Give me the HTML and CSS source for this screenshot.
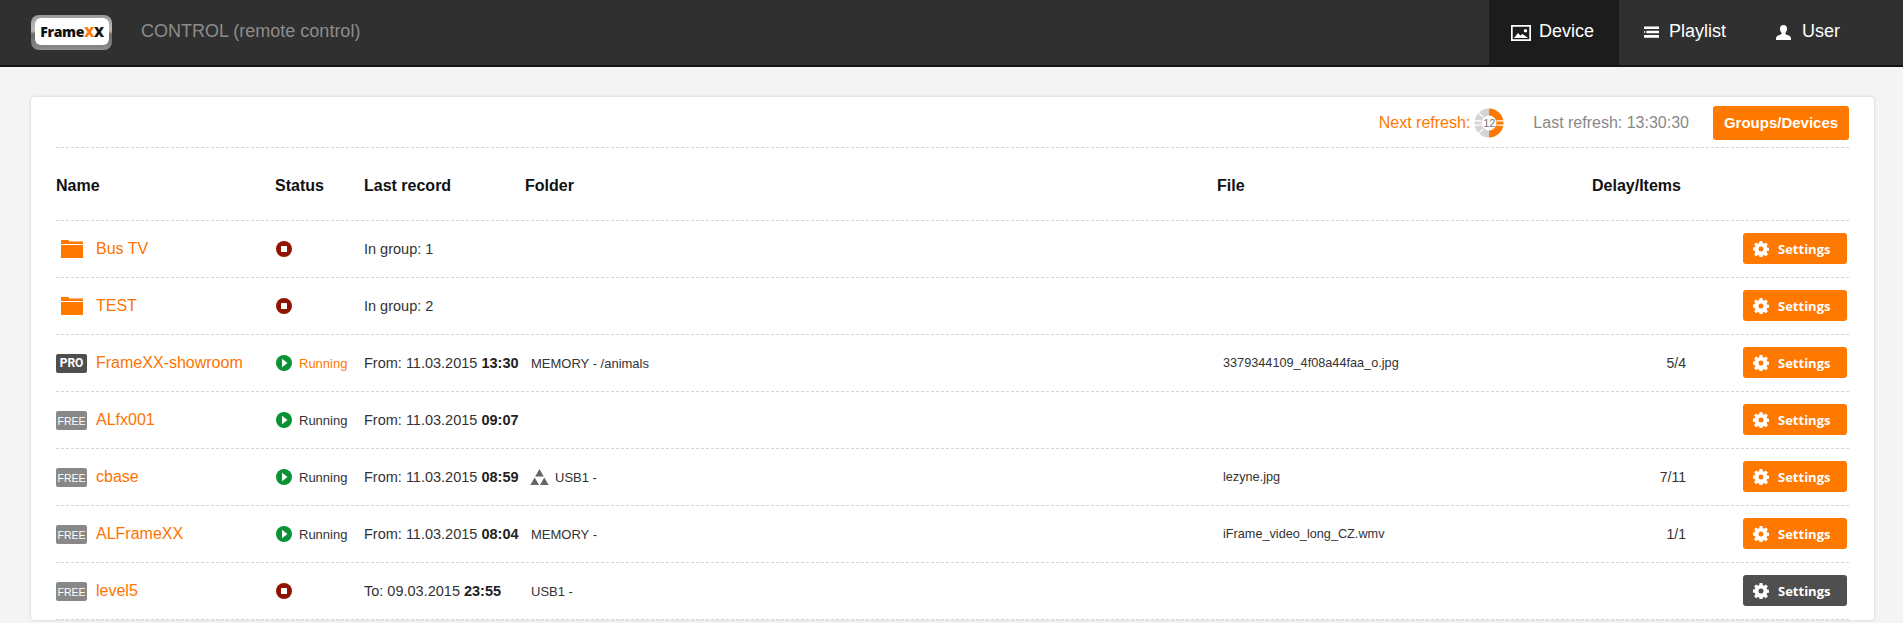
FILE: index.html
```html
<!DOCTYPE html>
<html lang="en">
<head>
<meta charset="utf-8">
<title>FrameXX CONTROL</title>
<link rel="stylesheet" href="styles.css">
</head>
<body>
<svg class="defs" width="0" height="0" aria-hidden="true">
  <defs>
    <symbol id="gear" viewBox="0 0 16 16"><path fill="currentColor" fill-rule="evenodd" d="M6.6 0h2.8l.4 2.2 1.2.5L12.900 1.400l2 2-1.300 1.900.5 1.200 2.200.4v2.800l-2.200.4-.5 1.200 1.300 1.900-2 2-1.900-1.300-1.200.5-.4 2.200H6.600l-.4-2.200-1.200-.5-1.900 1.300-2-2 1.300-1.900-.5-1.200L-.3 9.400V6.600l2.200-.4.500-1.200L1.100 3.400l2-2L5 2.700l1.200-.5zM8 5.500a2.500 2.500 0 1 0 0 5 2.500 2.500 0 0 0 0-5z"/></symbol>
    <symbol id="folder" viewBox="0 0 22 18"><path fill="currentColor" d="M0 .5Q0 0 .5 0h6.800l1.200 1.500H22V4H0zM0 5h22v13H0z"/></symbol>
    <symbol id="stop" viewBox="0 0 16 16"><circle cx="8" cy="8" r="8" fill="#8f1300"/><rect x="5" y="5" width="6" height="6" rx=".6" fill="#fff"/></symbol>
    <symbol id="play" viewBox="0 0 16 16"><circle cx="8" cy="8" r="8" fill="#0a9336"/><path d="M6 3.800v8.400L11.500 8z" fill="#fff"/></symbol>
    <symbol id="tri" viewBox="0 0 19 16"><path fill="#666" d="M9.500 0l4.300 7.500H5.200zM4.700 8.400l4.300 7.600H.3zM14.300 8.400l4.400 7.600H10z"/></symbol>
  </defs>
</svg>

<header class="topbar">
  <div class="brand">
    <div class="logo"><span class="logo-inner">Frame<span class="x-o">X</span>X</span></div>
    <span class="app-title">CONTROL (remote control)</span>
  </div>
  <nav class="nav">
    <a class="nav-item active">
      <svg class="nav-icon ni-image" viewBox="0 0 20 16"><path fill="#fff" fill-rule="evenodd" d="M0 0h20v16H0zM1.700 1.700v12.600h16.600V1.700z"/><path fill="#fff" d="M3 13l4-5 2.500 2.500 2-1.500 5.500 4zM14.500 4a1.700 1.700 0 1 1 0 3.400 1.700 1.700 0 0 1 0-3.400z"/></svg>
      Device
    </a>
    <a class="nav-item">
      <svg class="nav-icon ni-list" viewBox="0 0 16 12"><path fill="#fff" d="M0 0h16v2.800H0zM2.500 4.600H16v2.800H2.500zM0 4.600l1.700 1.400L0 7.400zM0 9.200h16V12H0z"/></svg>
      Playlist
    </a>
    <a class="nav-item">
      <svg class="nav-icon ni-user" viewBox="0 0 15 15"><path fill="#fff" d="M7.500 0C10 0 11.300 1.800 11 4.300c-.2 1.600-1 3-1.600 3.700-.2.700 0 1.200.7 1.500 2 .8 4.900 1.500 4.900 3.700V15H0v-1.800c0-2.200 2.900-2.900 4.900-3.700.7-.3.900-.8.700-1.500C5 7.300 4.200 5.900 4 4.300 3.700 1.800 5 0 7.500 0z"/></svg>
      User
    </a>
  </nav>
</header>

<main class="page">
  <section class="card">
    <div class="toolbar">
      <span class="next">Next refresh:</span>
      <span class="timer">
        <svg viewBox="0 0 30 30" width="30" height="30">
          <path class="t-gray" d="M15 4a11 11 0 0 0 0 22"/>
          <path class="t-orange" d="M15 4a11 11 0 0 1 0 22"/>
          <path class="t-gap" d="M0 12.800h7.500M22.500 12.800h7.500M0 17.200h7.500M22.500 17.200h7.500M4 4l5 5M4 26l5-5"/>
        </svg>
        <span class="timer-num">12</span>
      </span>
      <span class="last">Last refresh: 13:30:30</span>
      <a class="btn-groups">Groups/Devices</a>
    </div>

    <div class="row head">
      <div>Name</div><div>Status</div><div>Last record</div><div>Folder</div><div>File</div><div class="c-delay-h">Delay/Items</div><div></div>
    </div>

    <div class="row">
      <div class="name"><span class="lead"><svg class="folder"><use href="#folder"/></svg></span><a>Bus TV</a></div>
      <div class="status"><svg class="st"><use href="#stop"/></svg></div>
      <div class="rec">In group: 1</div><div class="fold"></div><div class="file"></div><div class="delay"></div>
      <div class="act"><a class="btn"><svg class="gear"><use href="#gear"/></svg>Settings</a></div>
    </div>

    <div class="row">
      <div class="name"><span class="lead"><svg class="folder"><use href="#folder"/></svg></span><a>TEST</a></div>
      <div class="status"><svg class="st"><use href="#stop"/></svg></div>
      <div class="rec">In group: 2</div><div class="fold"></div><div class="file"></div><div class="delay"></div>
      <div class="act"><a class="btn"><svg class="gear"><use href="#gear"/></svg>Settings</a></div>
    </div>

    <div class="row">
      <div class="name"><span class="lead"><span class="tag pro">PRO</span></span><a>FrameXX-showroom</a></div>
      <div class="status"><svg class="st"><use href="#play"/></svg><span class="run hot">Running</span></div>
      <div class="rec">From: 11.03.2015 <b>13:30</b></div><div class="fold">MEMORY - /animals</div><div class="file">3379344109_4f08a44faa_o.jpg</div><div class="delay">5/4</div>
      <div class="act"><a class="btn"><svg class="gear"><use href="#gear"/></svg>Settings</a></div>
    </div>

    <div class="row">
      <div class="name"><span class="lead"><span class="tag">FREE</span></span><a>ALfx001</a></div>
      <div class="status"><svg class="st"><use href="#play"/></svg><span class="run">Running</span></div>
      <div class="rec">From: 11.03.2015 <b>09:07</b></div><div class="fold"></div><div class="file"></div><div class="delay"></div>
      <div class="act"><a class="btn"><svg class="gear"><use href="#gear"/></svg>Settings</a></div>
    </div>

    <div class="row">
      <div class="name"><span class="lead"><span class="tag">FREE</span></span><a>cbase</a></div>
      <div class="status"><svg class="st"><use href="#play"/></svg><span class="run">Running</span></div>
      <div class="rec">From: 11.03.2015 <b>08:59</b></div><div class="fold fold-icon"><svg class="tri"><use href="#tri"/></svg>USB1 -</div><div class="file">lezyne.jpg</div><div class="delay">7/11</div>
      <div class="act"><a class="btn"><svg class="gear"><use href="#gear"/></svg>Settings</a></div>
    </div>

    <div class="row">
      <div class="name"><span class="lead"><span class="tag">FREE</span></span><a>ALFrameXX</a></div>
      <div class="status"><svg class="st"><use href="#play"/></svg><span class="run">Running</span></div>
      <div class="rec">From: 11.03.2015 <b>08:04</b></div><div class="fold">MEMORY -</div><div class="file">iFrame_video_long_CZ.wmv</div><div class="delay">1/1</div>
      <div class="act"><a class="btn"><svg class="gear"><use href="#gear"/></svg>Settings</a></div>
    </div>

    <div class="row">
      <div class="name"><span class="lead"><span class="tag">FREE</span></span><a>level5</a></div>
      <div class="status"><svg class="st"><use href="#stop"/></svg></div>
      <div class="rec">To: 09.03.2015 <b>23:55</b></div><div class="fold">USB1 -</div><div class="file"></div><div class="delay"></div>
      <div class="act"><a class="btn off"><svg class="gear"><use href="#gear"/></svg>Settings</a></div>
    </div>
  </section>
</main>
</body>
</html>
```

FILE: styles.css
```css
* { box-sizing: border-box; }
html, body { margin: 0; height: 100%; overflow: hidden; }
body {
  background: #f4f4f4;
  font-family: "Liberation Sans", Arial, sans-serif;
  color: #333;
}
.defs { position: absolute; }

.topbar {
  height: 67px;
  background: #303030;
  border-bottom: 2px solid #141414;
  display: flex;
  justify-content: space-between;
}
.brand { display: flex; align-items: center; padding-left: 31px; }
.logo {
  width: 81px;
  height: 35px;
  border-radius: 8px;
  padding: 3px 3px 5px 4px;
  background: linear-gradient(#9a9a9a, #bdbdbd 45%, #6a6a6a 55%, #8e8e8e);
  display: flex;
}
.logo-inner {
  flex: 1;
  background: #fff;
  border-radius: 6px;
  color: #111;
  font: 800 14px/28px "Open Sans", sans-serif;
  letter-spacing: -.3px;
  text-align: center;
}
.x-o { color: #ff7800; }
.app-title { margin-left: 29px; font-size: 18px; color: #8c8c8c; position: relative; top: -1px; }

.nav { display: flex; margin-right: 30px; }
.nav-item {
  display: flex;
  align-items: center;
  color: #fff;
  font-size: 18px;
  padding: 0 22px 2px;
  gap: 8px;
}
.nav-item.active { background: #1c1c1c; width: 130px; }
.nav-item:nth-child(2) { width: 130px; padding-left: 25px; gap: 10px; padding-right: 0; }
.nav-item:nth-child(3) { padding-left: 27px; padding-right: 0; width: 124px; gap: 11px; }
.nav-icon { flex: none; display: block; }
.ni-image { width: 20px; height: 16px; margin-top: 2px; }
.ni-list { width: 15px; height: 12px; }
.ni-user { width: 15px; height: 15px; margin-top: 2px; }

.page { padding: 30px 29px 0 31px; }
.card {
  background: #fff;
  border-radius: 3px;
  box-shadow: 0 0 3px rgba(0, 0, 0, .18);
  padding: 0 25px;
}
.toolbar {
  height: 51px;
  padding-top: 9px;
  border-bottom: 1px dashed #d4d4d4;
  display: flex;
  justify-content: flex-end;
  align-items: flex-start;
  font-size: 16px;
}
.next { color: #ff7800; line-height: 33px; }
.timer { position: relative; width: 30px; height: 30px; margin: 2px 0 0 4px; }
.timer svg { display: block; }
.t-gray, .t-orange { fill: none; stroke-width: 7; }
.t-gray { stroke: #d4d4d4; }
.t-orange { stroke: #ff7800; }
.t-gap { stroke: #fff; stroke-width: 1.200; fill: none; }
.timer-num {
  position: absolute;
  inset: 0;
  text-align: center;
  font-size: 11px;
  line-height: 30px;
  color: #777;
}
.last { color: #888; line-height: 33px; margin-left: 29px; }
.btn-groups {
  width: 136px;
  height: 34px;
  margin-left: 24px;
  background: #ff7800;
  color: #fff;
  border-radius: 3px;
  font-size: 15px;
  font-weight: 700;
  line-height: 34px;
  text-align: center;
}

.row {
  display: grid;
  grid-template-columns: 219px 89px 161px 692px 375px 94px 1fr;
  height: 57px;
  align-items: center;
  border-bottom: 1px dashed #d4d4d4;
  font-size: 14px;
}
.row.head {
  height: 73px;
  padding-top: 4px;
  font-size: 16px;
  font-weight: 700;
  color: #111;
}
.name { display: flex; align-items: center; font-size: 16px; }
.name a { color: #ff7300; }
.lead { width: 40px; flex: none; display: flex; align-items: center; }
.folder { width: 22px; height: 18px; color: #ff7800; margin-left: 5px; display: block; }
.tag {
  width: 31px;
  height: 19px;
  border-radius: 2px;
  background: #888;
  color: #fff;
  font-size: 10.500px;
  line-height: 20px;
  text-align: center;
}
.tag.pro { background: #4f4f4f; font: 700 12px/19px Roboto, sans-serif; }
.status { display: flex; align-items: center; gap: 7px; padding-left: 1px; }
.st { width: 16px; height: 16px; display: block; flex: none; }
.run { font-size: 13px; color: #333; }
.run.hot { color: #ff7800; }
.rec { color: #333; font-size: 14.500px; }
.rec b { color: #222; }
.fold { font-size: 13px; padding-left: 6px; color: #333; }
.fold-icon { display: flex; align-items: center; padding-left: 5px; }
.tri { width: 19px; height: 16px; margin-right: 6px; display: block; flex: none; }
.file { font-size: 12.700px; padding-left: 6px; color: #333; }
.delay { font-size: 14px; text-align: right; color: #333; }
.c-delay-h { white-space: nowrap; }
.act { display: flex; justify-content: flex-end; padding-right: 2px; }
.btn {
  width: 104px;
  height: 31px;
  margin-bottom: 1px;
  background: #ff7800;
  color: #fff;
  border-radius: 3px;
  display: flex;
  align-items: center;
  padding-left: 10px;
  font-size: 13px;
  font-weight: 700;
  font-family: "Open Sans", sans-serif;
}
.btn.off { background: #4f4f4f; }
.gear { width: 16px; height: 16px; margin-right: 9px; display: block; flex: none; }
```
